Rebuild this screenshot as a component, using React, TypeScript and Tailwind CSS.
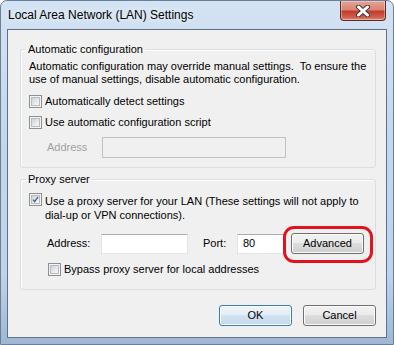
import React from "react";

function Checkbox({ checked = false }: { checked?: boolean }) {
  return (
    <span className="flex h-[13px] w-[13px] shrink-0 border border-[#8e8f8f] bg-[#f4f4f4] p-px">
      <span className="flex flex-1 border border-[#b8bcc1] bg-[linear-gradient(135deg,#cfd2d7,#eceef0_70%,#f6f6f6)]">
        {checked && (
          <svg viewBox="0 0 9 9" className="h-full w-full">
            <path d="M1.3 4.6 L3.4 7.2 L7.8 1.2" fill="none" stroke="#4a5f8f" strokeWidth="1.7" />
          </svg>
        )}
      </span>
    </span>
  );
}

function WinButton({ label, primary = false }: { label: string; primary?: boolean }) {
  return (
    <button
      className={`flex h-[21px] w-[73px] items-center justify-center rounded-[3px] border text-[11px] leading-none text-black shadow-[inset_0_0_0_1px_#fcfcfc] ${
        primary
          ? "border-[#3c7fb1] bg-[linear-gradient(#eef5fb,#e2edf7_50%,#d3e2ef_50%,#c6d8e8)]"
          : "border-[#707070] bg-[linear-gradient(#f2f2f2,#ebebeb_50%,#dddddd_50%,#cfcfcf)]"
      }`}
    >
      {label}
    </button>
  );
}

export default function App() {
  return (
    <div className="flex h-[345px] w-[394px] flex-col overflow-hidden rounded-t-[7px] border border-[#6a7f98] bg-[linear-gradient(#d4e3f3,#c3d7ec_40%,#bed3ea_80%,#9fb7d3)] font-['Liberation_Sans',Arial,sans-serif] text-[11px] text-black">
      {/* title bar */}
      <div className="flex h-[28px] shrink-0 items-start justify-between">
        <span className="ml-[7px] mt-[7px] text-[12px] leading-[15px] text-black [text-shadow:0_0_6px_#ffffff]">
          Local Area Network (LAN) Settings
        </span>
        <div className="mr-[7px] flex h-[20px] w-[46px] items-center justify-center rounded-b-[4px] border border-t-0 border-[#5e2a22] bg-[linear-gradient(#e6a396,#d98573_45%,#c33c2c_55%,#cf5f4c_85%,#e08b74)] shadow-[inset_0_0_0_1px_rgba(255,255,255,0.35)]">
          <svg width="16" height="12" viewBox="0 0 16 12">
            <path d="M3.5 2 L12.5 10 M12.5 2 L3.5 10" stroke="#3b3b3b" strokeWidth="5" strokeLinecap="round" />
            <path d="M3.5 2 L12.5 10 M12.5 2 L3.5 10" stroke="#ffffff" strokeWidth="3" strokeLinecap="round" />
          </svg>
        </div>
      </div>

      {/* client area */}
      <div className="mx-[6px] flex h-[309px] shrink-0 flex-col border border-[#5f7189] bg-[#f0f0f0]">
        <fieldset className="ml-[12px] mt-[12px] w-[356px] rounded-[3px] border border-[#d5dfe5] px-[8px] pb-[9px] shadow-[inset_1px_1px_0_#ffffff]">
          <legend className="-ml-[3px] px-[2px] leading-[15px]">Automatic configuration</legend>
          <p className="mt-[3px] leading-[13px]">
            Automatic configuration may override manual settings.&nbsp; To ensure the
            <br />
            use of manual settings, disable automatic configuration.
          </p>
          <div className="mt-[9px] flex h-[13px] items-center gap-[3px]">
            <Checkbox />
            <span>Automatically detect settings</span>
          </div>
          <div className="mt-[8px] flex h-[13px] items-center gap-[3px]">
            <Checkbox />
            <span>Use automatic configuration script</span>
          </div>
          <div className="mt-[8px] flex items-center pl-[18px]">
            <span className="w-[55px] text-[#a0a0a0]">Address</span>
            <div className="h-[21px] w-[184px] border border-[#c2c2c2] bg-[#f0f0f0]" />
          </div>
        </fieldset>

        <fieldset className="ml-[12px] mt-[4px] w-[356px] rounded-[3px] border border-[#d5dfe5] px-[8px] pb-[13px] shadow-[inset_1px_1px_0_#ffffff]">
          <legend className="-ml-[3px] px-[2px] leading-[15px]">Proxy server</legend>
          <div className="mt-[6px] flex items-start gap-[3px]">
            <Checkbox checked />
            <p className="mt-[1px] leading-[14px]">
              Use a proxy server for your LAN (These settings will not apply to
              <br />
              dial-up or VPN connections).
            </p>
          </div>
          <div className="mt-[11px] flex items-center pl-[18px]">
            <span className="w-[54px]">Address:</span>
            <div className="h-[20px] w-[87px] border border-[#abadb3] border-x-[#e2e3ea] border-b-[#e3e9ef] bg-white" />
            <span className="ml-[15px] w-[34px]">Port:</span>
            <div className="flex h-[20px] w-[49px] items-center border border-[#abadb3] border-x-[#e2e3ea] border-b-[#e3e9ef] bg-white pl-[5px]">
              80
            </div>
            <span className="relative ml-[5px]">
              <WinButton label="Advanced" />
              <span className="pointer-events-none absolute -bottom-[9px] -left-[8px] -right-[9px] -top-[7px] rounded-[11px] border-[3px] border-[#e2121f]" />
            </span>
          </div>
          <div className="mt-[9px] flex h-[13px] items-center gap-[3px] pl-[19px]">
            <Checkbox />
            <span>Bypass proxy server for local addresses</span>
          </div>
        </fieldset>

        <div className="ml-[12px] mt-[15px] flex w-[356px] justify-end gap-[11px]">
          <WinButton label="OK" primary />
          <WinButton label="Cancel" />
        </div>
      </div>
    </div>
  );
}
